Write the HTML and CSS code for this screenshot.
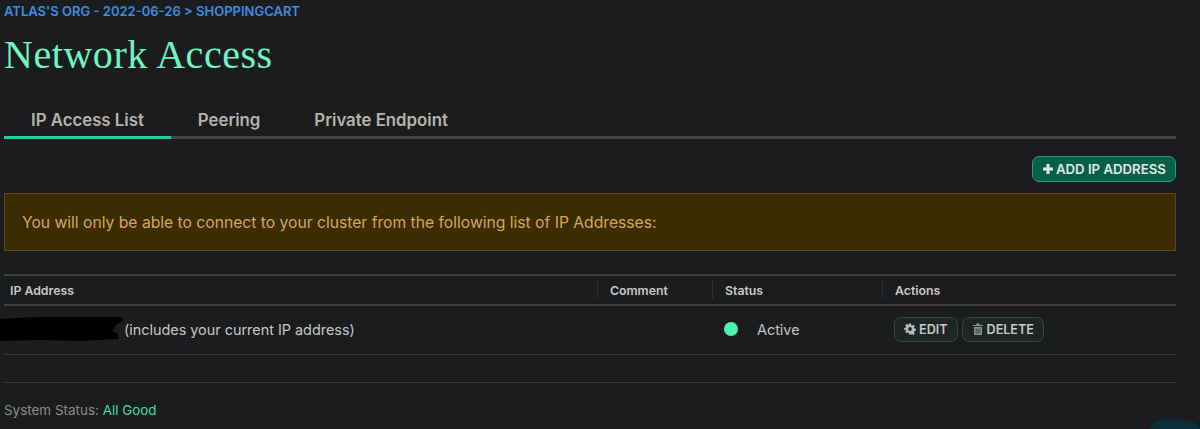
FILE: index.html
```html
<!DOCTYPE html>
<html lang="en">
<head>
<meta charset="utf-8">
<title>Network Access</title>
<link rel="stylesheet" href="styles.css">
</head>
<body>
<main class="page">
  <div class="crumb">ATLAS'S ORG - 2022-06-26 &gt; SHOPPINGCART</div>
  <h1 class="title">Network Access</h1>
  <nav class="tabs">
    <a class="tab active">IP Access List</a>
    <a class="tab">Peering</a>
    <a class="tab">Private Endpoint</a>
  </nav>
  <div class="toolbar">
    <button class="add-btn"><svg class="plus" viewBox="0 0 12 12"><path d="M4.500 1h3v3.500H11v3H7.500V11h-3V7.500H1v-3h3.500z"/></svg>ADD IP ADDRESS</button>
  </div>
  <div class="alert">You will only be able to connect to your cluster from the following list of IP Addresses:</div>
  <div class="table">
    <div class="row head">
      <div class="cell c1">IP Address</div>
      <div class="cell c2"><span class="th">Comment</span></div>
      <div class="cell c3"><span class="th">Status</span></div>
      <div class="cell c4"><span class="th">Actions</span></div>
    </div>
    <div class="row body">
      <div class="cell c1 ip"><svg class="redact" viewBox="0 0 128 26" preserveAspectRatio="none"><path d="M0 3 40 1 l85 0 3 3-8 5-4 6 6 3 0 5-40 2-40-1-42 1z"/></svg>(includes your current IP address)</div>
      <div class="cell c2"></div>
      <div class="cell c3 status"><span class="dot"></span>Active</div>
      <div class="cell c4 actions">
        <button class="act"><svg class="ico" viewBox="0 0 24 24"><path fill-rule="evenodd" d="M10 1h4l.7 3.300 2 .8L19.500 3.300l2.900 2.900-1.800 2.800.8 2 3.300.7v4l-3.300.7-.8 2 1.800 2.800-2.900 2.900-2.800-1.800-2 .8L14 23h-4l-.7-3.300-2-.8-2.800 1.800-2.900-2.900 1.800-2.800-.8-2L-.7 14v-4l3.300-.7.8-2-1.800-2.800 2.900-2.900 2.800 1.800 2-.8zM12 8a4 4 0 1 0 0 8 4 4 0 0 0 0-8z" transform="translate(1 0) scale(.92 1)"/></svg>EDIT</button>
        <button class="act"><svg class="ico trash" viewBox="0 0 24 24"><path fill-rule="evenodd" d="M8 4 9.500 1h5L16 4h6v2H2V4zM4 8h16v14a2 2 0 0 1-2 2H6a2 2 0 0 1-2-2zM7.500 11v10h1.500V11zM11.250 11v10h1.500V11zM15 11v10h1.500V11z"/></svg>DELETE</button>
      </div>
    </div>
  </div>
  <footer class="foot">System Status: <span class="good">All Good</span></footer>
</main>
<div class="chat"></div>
</body>
</html>
```
FILE: styles.css
```css
* { box-sizing: border-box; }
html, body { margin: 0; height: 429px; overflow: hidden; }
body {
  background: #1a1c1e;
  font-family: Inter, "Noto Sans", sans-serif;
  color: #c5c4c1;
  position: relative;
}
.page { padding: 0 24px 0 4px; }
.crumb {
  height: 23px;
  line-height: 22px;
  font-size: 13px;
  font-weight: 600;
  color: #3d8ee0;
}
.title {
  margin: 0;
  height: 60px;
  line-height: 63px;
  font-family: "Liberation Serif", serif;
  font-weight: 400;
  font-size: 40px;
  letter-spacing: .55px;
  color: #6ff5c3;
}
.tabs {
  display: flex;
  margin-top: 19px;
  height: 37px;
  border-bottom: 3px solid #444547;
}
.tab {
  height: 37px;
  padding: 0 27px;
  line-height: 37px;
  font-size: 16.800px;
  font-weight: 600;
  color: #b8b3aa;
}
.tab.active { border-bottom: 3px solid #13d39a; }
.toolbar { display: flex; justify-content: flex-end; margin-top: 17px; }
.add-btn {
  display: flex;
  align-items: center;
  gap: 2px;
  width: 144px;
  height: 26px;
  padding: 0 0 0 9px;
  border: 1px solid #2f9c78;
  border-radius: 7px;
  background: #05604a;
  color: #e3e8e4;
  font: 600 13.200px Inter, sans-serif;
}
.plus { width: 12px; height: 12px; fill: #e3e8e4; flex: none; }
.alert {
  margin-top: 11px;
  height: 58px;
  padding-left: 17px;
  line-height: 57px;
  background: #3a2d03;
  border: 1px solid #5f4a11;
  color: #d9a55d;
  font-size: 15.670px;
}
.table { margin-top: 23px; }
.row { display: flex; }
.head {
  height: 32px;
  border-top: 2px solid #3d3f41;
  border-bottom: 2px solid #3d3f41;
  align-items: center;
  font-size: 12.300px;
  font-weight: 600;
  color: #c9c8c5;
}
.body { height: 49px; padding-bottom: 2px; border-bottom: 1px solid #333537; align-items: center; font-size: 14.400px; }
.cell { display: flex; align-items: center; }
.c1 { width: 593px; padding-left: 6px; }
.c2 { width: 115px; }
.c3 { width: 170px; }
.c4 { flex: 1; }
.th { display: block; height: 18px; line-height: 19px; padding-left: 12px; border-left: 1px solid #2c2e30; }
.ip { padding-left: 0; color: #c9c7c3; margin-left: -4px; width: 597px; }
.redact { width: 124px; height: 26px; fill: #000; flex: none; }
.status { padding-left: 12px; color: #c5c4c1; }
.dot { width: 14px; height: 14px; border-radius: 50%; background: #4ff2b0; margin-right: 19px; }
.actions { gap: 4px; padding-left: 12px; }
.act {
  display: flex;
  align-items: center;
  gap: 3px;
  height: 25px;
  padding: 0 9px;
  border: 1px solid #3c4442;
  border-radius: 7px;
  background: #1c2725;
  color: #c9c8c5;
  font: 600 12.600px Inter, sans-serif;
}
.ico { width: 12px; height: 12px; fill: #b9b9b6; flex: none; }
.trash { fill: #8f8f8c; }
.foot {
  margin-top: 27px;
  height: 46px;
  border-top: 1px solid #333537;
  padding-top: 19px;
  font-size: 13.450px;
  line-height: 17px;
  color: #8b8b88;
}
.good { color: #48dfa5; }
.chat {
  position: absolute;
  left: 1150px;
  top: 419px;
  width: 50px;
  height: 10px;
  border-radius: 50% 50% 0 0 / 100% 100% 0 0;
  background: #0a2f38;
}
```
